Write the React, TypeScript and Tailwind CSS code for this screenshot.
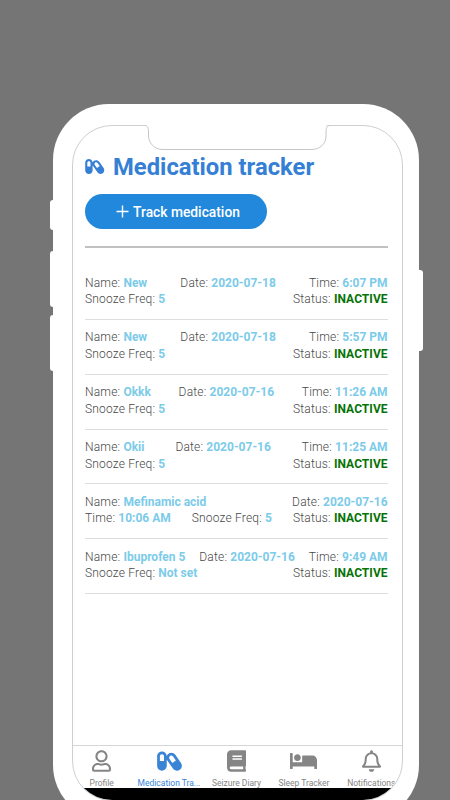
import type { ComponentType } from 'react'
import { FaBed, FaBook, FaCapsules, FaRegBell, FaRegUser } from 'react-icons/fa'

type Field = {
  label: string
  value: string
}

const status: Field = { label: 'Status', value: 'INACTIVE' }

const medications: Field[][][] = [
  [
    [{ label: 'Name', value: 'New' }, { label: 'Date', value: '2020-07-18' }, { label: 'Time', value: '6:07 PM' }],
    [{ label: 'Snooze Freq', value: '5' }, status],
  ],
  [
    [{ label: 'Name', value: 'New' }, { label: 'Date', value: '2020-07-18' }, { label: 'Time', value: '5:57 PM' }],
    [{ label: 'Snooze Freq', value: '5' }, status],
  ],
  [
    [{ label: 'Name', value: 'Okkk' }, { label: 'Date', value: '2020-07-16' }, { label: 'Time', value: '11:26 AM' }],
    [{ label: 'Snooze Freq', value: '5' }, status],
  ],
  [
    [{ label: 'Name', value: 'Okii' }, { label: 'Date', value: '2020-07-16' }, { label: 'Time', value: '11:25 AM' }],
    [{ label: 'Snooze Freq', value: '5' }, status],
  ],
  [
    [{ label: 'Name', value: 'Mefinamic acid' }, { label: 'Date', value: '2020-07-16' }],
    [{ label: 'Time', value: '10:06 AM' }, { label: 'Snooze Freq', value: '5' }, status],
  ],
  [
    [{ label: 'Name', value: 'Ibuprofen 5' }, { label: 'Date', value: '2020-07-16' }, { label: 'Time', value: '9:49 AM' }],
    [{ label: 'Snooze Freq', value: 'Not set' }, status],
  ],
]

const tabs: { label: string; icon: ComponentType<{ className?: string }>; size: string; active?: boolean }[] = [
  { label: 'Profile', icon: FaRegUser, size: 'h-[22px] w-[19px]' },
  { label: 'Medication Tra...', icon: FaCapsules, size: 'h-[22px] w-[25px]', active: true },
  { label: 'Seizure Diary', icon: FaBook, size: 'h-[22px] w-[19px]' },
  { label: 'Sleep Tracker', icon: FaBed, size: 'h-[22px] w-[27px]' },
  { label: 'Notifications', icon: FaRegBell, size: 'h-[22px] w-[19px]' },
]

function Notch() {
  return (
    <svg className="absolute -top-[2px] left-[73px] h-[28px] w-[184px]" viewBox="0 0 184 28" fill="none">
      <path d="M0 0H184V1.5H180Q179.5 2 179 8C179 18 175 25.5 165 25.5H16C6 25.5 2.5 18 2 8Q2 2 0 1.5Z" fill="#fff" />
      <path
        d="M-2 1.5C1 1.5 2.5 3 2.5 7V11C2.5 19 8 25.5 17 25.5H165C174 25.5 180 20 180 12V8C180 4 181 1.5 184 1.5"
        stroke="#c6c6c6"
        strokeWidth="1"
      />
    </svg>
  )
}

function MedicationItem({ lines }: { lines: Field[][] }) {
  return (
    <li className="h-[54.8px] border-b border-[#dedede] pt-[9.4px]">
      {lines.map((line, i) => (
        <div key={i} className="flex h-[16.6px] items-center justify-between text-[12px] leading-[16.6px] whitespace-nowrap">
          {line.map((field) => (
            <span key={field.label} className="font-light tracking-[0.19px]">
              {field.label}:{' '}
              <b className={field.label === 'Status' ? 'font-bold tracking-[0.05px] text-[#057305]' : 'font-bold tracking-[0px] text-[#7ccbe9]'}>
                {field.value}
              </b>
            </span>
          ))}
        </div>
      ))}
    </li>
  )
}

export default function App() {
  return (
    <div className="h-[800px] w-[450px] overflow-hidden bg-[#757575] pt-[104px] pl-[53px] font-['Roboto',sans-serif]">
      <div className="relative h-[717px] w-[366px] rounded-[56px] bg-white px-[19px] pt-[21px]">
        <div className="absolute top-[96px] -left-[3px] h-[30px] w-[4px] rounded-l-[3px] bg-white" />
        <div className="absolute top-[147px] -left-[3px] h-[56px] w-[4px] rounded-l-[3px] bg-white" />
        <div className="absolute top-[211px] -left-[3px] h-[56px] w-[4px] rounded-l-[3px] bg-white" />
        <div className="absolute top-[166px] -right-[4px] h-[81px] w-[5px] rounded-r-[3px] bg-white" />

        <div className="relative h-[676px] w-[331px] rounded-[40px] border border-[#cfcfcf]">
          <Notch />
          <div className="flex h-full flex-col overflow-hidden rounded-[39px]">
            <main className="flex-1 pt-[27px] pr-[14.4px] pl-3 text-[#484848]">
              <h1 className="flex h-[30px] items-center gap-[8.5px] text-[23.8px] font-bold text-[#3580d4]">
                <FaCapsules className="mb-[4px] h-[17px] w-[19.5px]" />
                Medication tracker
              </h1>
              <button className="mt-[11px] flex h-[35px] w-[182px] items-center justify-center gap-[4px] rounded-full bg-[#2188dc] pt-[2px] pl-[4px] text-[13.8px] font-medium text-white">
                <svg className="mb-[2px] h-[13px] w-[13px]" viewBox="0 0 13 13" stroke="currentColor" strokeWidth="1.4">
                  <path d="M6.5 0.5V12.5M0.5 6.5H12.5" />
                </svg>
                Track medication
              </button>
              <hr className="mt-[17px] border-t-2 border-[#c0c1c3]" />
              <ul className="mt-[17.2px]">
                {medications.map((lines, i) => (
                  <MedicationItem key={i} lines={lines} />
                ))}
              </ul>
            </main>
            <nav className="-mr-[3px] -ml-[5px] grid h-[43px] shrink-0 grid-cols-5 border-t border-[#d6d6d6]">
              {tabs.map(({ label, icon: Icon, size, active }) => (
                <div
                  key={label}
                  className={
                    active
                      ? 'flex flex-col items-center pt-[4px] text-[#3a84d6]'
                      : 'flex flex-col items-center pt-[4px] text-[#858585]'
                  }
                >
                  <Icon className={size} />
                  <span className="mt-[5.5px] text-[8.5px] leading-[11px] whitespace-nowrap">{label}</span>
                </div>
              ))}
            </nav>
            <div className="h-[12px] shrink-0 bg-black" />
          </div>
        </div>
      </div>
    </div>
  )
}
